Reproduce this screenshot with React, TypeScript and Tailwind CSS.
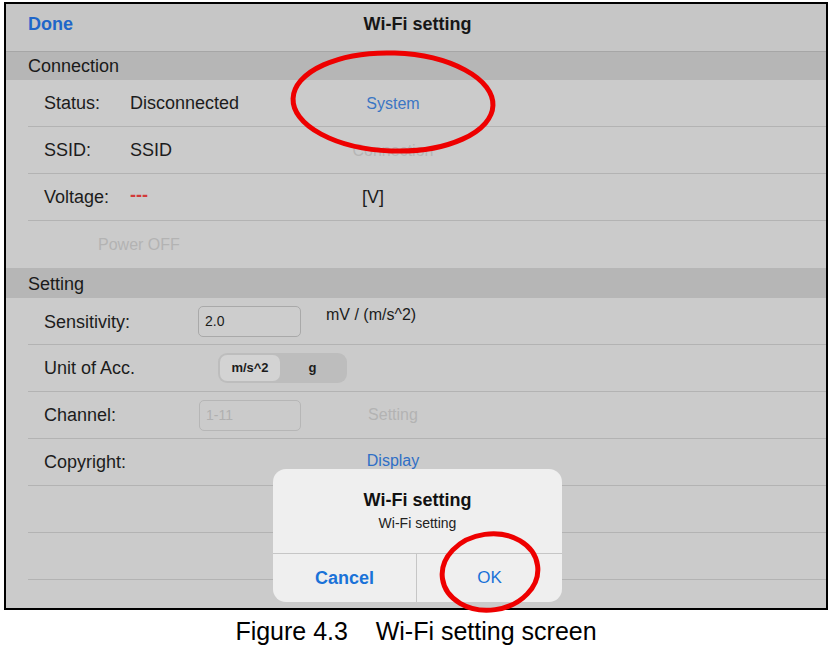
import React from "react";

const font = { fontFamily: '"Liberation Sans", Arial, sans-serif' };

function Row({ children, className = "" }: { children?: React.ReactNode; className?: string }) {
  return (
    <div className={"ml-[22px] h-[47px] shrink-0 border-b border-[#b3b3b3] flex items-center " + className}>
      {children}
    </div>
  );
}

export default function App() {
  return (
    <div className="relative w-[832px] h-[651px] bg-white overflow-hidden" style={font}>
      {/* Framed screenshot */}
      <div className="ml-[4px] mt-[2px] w-[824px] border-2 border-black bg-[#cbcbcb]">
        <div className="h-[604px] overflow-hidden flex flex-col text-[#1c1c1c]">
          {/* Nav bar */}
          <div className="h-[47px] shrink-0 bg-[#c6c6c6] flex items-center relative">
            <div className="pl-[22px] pb-[6px] text-[18px] font-bold text-[#1f66c9]">Done</div>
            <div className="flex-1 text-center pb-[6px] pr-[64px] text-[18px] font-bold text-[#161616]">Wi-Fi setting</div>
          </div>
          {/* Connection header */}
          <div className="h-[29px] shrink-0 bg-[#b6b6b6] border-t border-[#a6a6a6] flex items-center pl-[22px] text-[18px] text-[#1a1a1a]">
            Connection
          </div>
          <Row>
            <div className="pl-[16px] w-[102px] text-[18px] pt-[1px]">Status:</div>
            <div className="w-[208px] text-[18px]">Disconnected</div>
            <div className="w-[110px] text-center text-[16px] text-[#3b76c4] pt-[2px]">System</div>
          </Row>
          <Row>
            <div className="pl-[16px] w-[102px] text-[18px] pt-[1px]">SSID:</div>
            <div className="w-[208px] text-[18px]">SSID</div>
            <div className="w-[110px] text-center text-[16px] text-[#b6b6b6] pt-[1px]">Connection</div>
          </Row>
          <Row>
            <div className="pl-[16px] w-[102px] text-[18px] pt-[1px]">Voltage:</div>
            <div className="w-[232px] text-[18px] font-bold text-[#d23a3a] pb-[3px]">---</div>
            <div className="text-[18px]">[V]</div>
          </Row>
          <div className="ml-[22px] h-[47px] shrink-0 flex items-center">
            <div className="pl-[70px] pt-[1px] text-[16px] text-[#b3b3b3]">Power OFF</div>
          </div>
          {/* Setting header */}
          <div className="h-[30px] shrink-0 bg-[#b6b6b6] flex items-center pl-[22px] pt-[2px] text-[18px] text-[#1a1a1a]">
            Setting
          </div>
          <Row>
            <div className="pl-[16px] w-[170px] text-[18px] pt-[3px]">Sensitivity:</div>
            <div className="w-[103px] h-[31px] rounded-[5px] border border-[#a9a9a9] bg-[#cdcdcd] flex items-center pl-[6px] text-[14px]">
              2.0
            </div>
            <div className="ml-[25px] mb-[12px] text-[16px]">mV / (m/s^2)</div>
          </Row>
          <Row>
            <div className="pl-[16px] w-[190px] text-[18px]">Unit of Acc.</div>
            <div className="w-[129px] h-[30px] rounded-[9px] bg-[#bdbdbd] flex items-center p-[2px]">
              <div className="w-[60px] h-[26px] rounded-[7px] bg-[#d3d3d3] flex items-center justify-center text-[13px] font-bold">
                m/s^2
              </div>
              <div className="flex-1 h-[26px] flex items-center justify-center text-[13px] font-bold">g</div>
            </div>
          </Row>
          <Row>
            <div className="pl-[16px] w-[171px] text-[18px] pt-[1px]">Channel:</div>
            <div className="w-[102px] h-[31px] rounded-[5px] border border-[#b6b6b6] bg-[#cbcbcb] flex items-center pl-[6px] text-[14px] text-[#b0b0b0]">
              1-11
            </div>
            <div className="w-[37px]" />
            <div className="w-[110px] text-center text-[16px] text-[#b3b3b3]">Setting</div>
          </Row>
          <Row>
            <div className="pl-[16px] w-[310px] text-[18px] pt-[1px]">Copyright:</div>
            <div className="w-[110px] text-center text-[16px] text-[#2f6fc6] pb-[2px]">Display</div>
          </Row>
          <Row />
          <Row />
          <Row />
        </div>
      </div>

      {/* Caption */}
      <div className="w-[832px] h-[42px] pt-[2px] flex items-center justify-center text-[25px] text-black whitespace-pre">
        {"Figure 4.3    Wi-Fi setting screen"}
      </div>

      {/* Alert dialog */}
      <div className="absolute left-[273px] top-[469px] w-[289px] h-[133px] rounded-[13px] bg-[#efefef] flex flex-col overflow-hidden">
        <div className="h-[85px] shrink-0 flex flex-col items-center pt-[20px] border-b border-[#c6c6c6]">
          <div className="text-[18px] leading-[22px] font-bold text-[#111]">Wi-Fi setting</div>
          <div className="mt-[3px] text-[14px] leading-[18px] text-[#222]">Wi-Fi setting</div>
        </div>
        <div className="flex-1 flex">
          <div className="w-[144px] flex items-center justify-center border-r border-[#c6c6c6] text-[18px] font-bold text-[#1a72d8]">
            Cancel
          </div>
          <div className="flex-1 flex items-center justify-center text-[17px] text-[#1a72d8]">OK</div>
        </div>
      </div>

      {/* Red annotation ellipses */}
      <svg className="absolute left-0 top-0 pointer-events-none" width="832" height="651" viewBox="0 0 832 651">
        <ellipse cx="393" cy="102" rx="100" ry="49" fill="none" stroke="#ee0000" strokeWidth="5" transform="rotate(2 393 102)" />
        <ellipse cx="490" cy="572" rx="48" ry="38" fill="none" stroke="#ee0000" strokeWidth="5" transform="rotate(-8 490 572)" />
      </svg>
    </div>
  );
}
